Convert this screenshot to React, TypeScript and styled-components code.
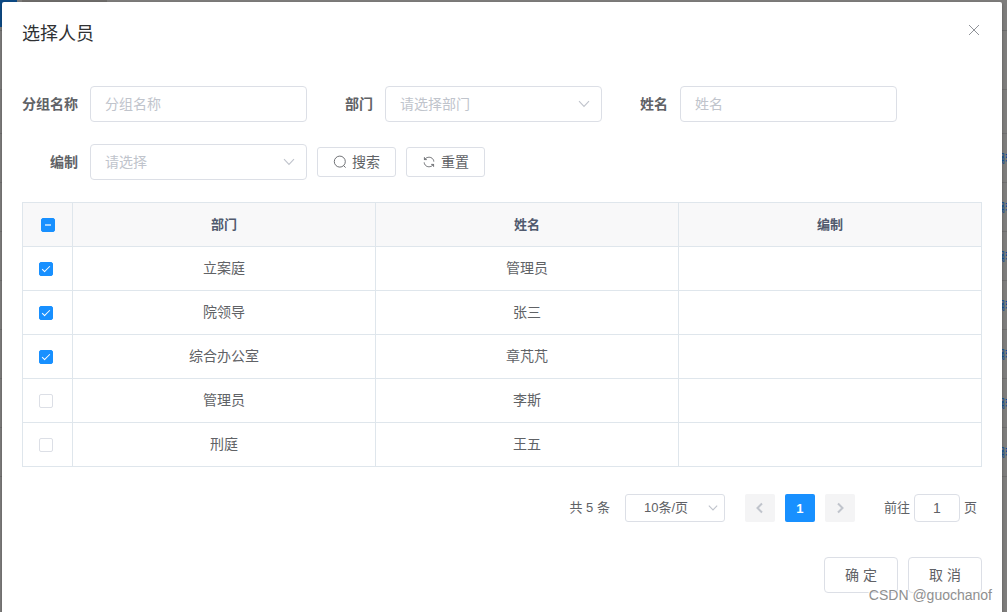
import React, { useEffect, useRef, useState } from "react";
import styled, { createGlobalStyle, css } from "styled-components";

const GlobalStyle = createGlobalStyle`
  *, *::before, *::after { box-sizing: border-box; }
  body {
    margin: 0;
    background: #7f7f7f;
    color: #606266;
    font-family: "Liberation Sans", "Noto Sans CJK SC", sans-serif;
    font-size: 14px;
  }
  button, input, select { font: inherit; color: inherit; margin: 0; }
`;

const Screen = styled.div`
  position: relative;
  min-height: 100vh;
  padding: 2px 5px 0 2px;
  overflow: hidden;
`;

/* The dimmed page that stays behind the dialog */
const Behind = styled.div`
  position: absolute;
  inset: 0;
  overflow: hidden;
  background: #7e7d7c;
`;

const TabStrip = styled.div`
  display: flex;
  gap: 5px;
  height: 31px;
  border-bottom: 1px solid #6c6c6c;
`;

const Tab = styled.div<{ $active?: boolean }>`
  width: ${(p) => (p.$active ? 17 : 85)}px;
  height: 27px;
  background: ${(p) => (p.$active ? "#0d4a86" : "#6f6d6b")};
`;

const BehindRow = styled.div<{ $height: number }>`
  display: flex;
  justify-content: flex-end;
  align-items: center;
  height: ${(p) => p.$height}px;
  border-bottom: 1px solid #706f6f;
`;

const BehindAction = styled.span`
  width: 14px;
  padding-top: 2px;
  overflow: hidden;
  white-space: nowrap;
  font-size: 12px;
  line-height: 18px;
  color: #0c4f96;
`;

const Dialog = styled.section`
  position: relative;
  min-height: calc(100vh - 2px);
  background: #fff;
  border-radius: 2px 2px 0 0;
  box-shadow: 0 1px 3px rgba(0, 0, 0, 0.3);
`;

const DialogHeader = styled.header`
  display: flex;
  justify-content: space-between;
  padding: 20px 20px 10px;
`;

const Title = styled.h1`
  margin: 0;
  font-size: 18px;
  line-height: 24px;
  font-weight: 400;
  color: #303133;
`;

const CloseButton = styled.button`
  display: flex;
  align-items: center;
  justify-content: center;
  width: 16px;
  height: 16px;
  padding: 0;
  border: 0;
  background: none;
  color: #909399;
`;

const DialogBody = styled.div`
  padding: 30px 20px 0;
`;

const SearchForm = styled.form`
  display: flex;
  flex-wrap: wrap;
  align-items: center;
  gap: 22px 10px;
  max-width: 900px;
  margin-bottom: 22px;
`;

const FormItem = styled.div`
  display: flex;
  align-items: center;
`;

const Label = styled.label`
  width: 68px;
  padding-right: 12px;
  text-align: right;
  white-space: nowrap;
  font-weight: 700;
  line-height: 36px;
`;

const fieldBox = css`
  border: 1px solid #dcdfe6;
  border-radius: 4px;
  background: #fff;
  outline: none;
`;

const TextInput = styled.input`
  ${fieldBox}
  width: 217px;
  height: 36px;
  padding: 0 14px;
  &::placeholder { color: #c0c4cc; opacity: 1; }
`;

const SelectWrap = styled.div`
  display: grid;
  align-items: center;
  & > * { grid-area: 1 / 1; }
`;

const Select = styled.select<{ $small?: boolean }>`
  ${fieldBox}
  appearance: none;
  width: ${(p) => (p.$small ? 100 : 217)}px;
  height: ${(p) => (p.$small ? 28 : 36)}px;
  padding: ${(p) => (p.$small ? "0 24px 2px 18px" : "0 30px 0 14px")};
  border-radius: ${(p) => (p.$small ? 3 : 4)}px;
  color: ${(p) => (p.$small ? "#606266" : "#c0c4cc")};
`;

const Arrow = styled.svg<{ $small?: boolean }>`
  justify-self: end;
  margin-right: ${(p) => (p.$small ? 7 : 12)}px;
  pointer-events: none;
  fill: none;
  stroke: #c0c4cc;
`;

const ToolButton = styled.button`
  ${fieldBox}
  display: flex;
  align-items: center;
  gap: 5px;
  height: 30px;
  padding: 0 15px;
  border-radius: 3px;
`;

/* CJK glyphs sit low in their line box; the bottom padding centres them */
const ButtonText = styled.span`
  padding-bottom: 2px;
`;

const DataTable = styled.table`
  width: 100%;
  table-layout: fixed;
  border-collapse: separate;
  border-spacing: 0;
  border: solid #dfe6ec;
  border-width: 1px 0 0 1px;
`;

const cell = css`
  height: 44px;
  padding: 0 10px 3px;
  border: solid #dfe6ec;
  border-width: 0 1px 1px 0;
  text-align: center;
`;

const HeadCell = styled.th`
  ${cell}
  background: #f8f8f9;
  color: #515a6e;
  font-size: 13px;
  font-weight: 700;
`;

const Cell = styled.td`
  ${cell}
`;

const CheckHead = styled(HeadCell)`
  width: 50px;
  padding: 0 0 0 18px;
`;

const CheckCell = styled(Cell)`
  padding: 0 0 0 16px;
`;

const Checkbox = styled.input`
  appearance: none;
  display: flex;
  align-items: center;
  justify-content: center;
  width: 14px;
  height: 14px;
  border: 1px solid #dcdfe6;
  border-radius: 2px;
  background: #fff;
  &:checked, &:indeterminate {
    border-color: #1890ff;
    background: #1890ff;
  }
  &:checked::after {
    content: "";
    width: 4px;
    height: 8px;
    margin-bottom: 2px;
    border: solid #fff;
    border-width: 0 1px 1px 0;
    transform: rotate(45deg);
  }
  &:indeterminate::after {
    content: "";
    width: 6px;
    height: 2px;
    margin: 0;
    border: 0;
    background: #a3d3ff;
    transform: none;
  }
`;

const Pagination = styled.nav`
  display: flex;
  justify-content: flex-end;
  align-items: center;
  height: 28px;
  margin-top: 27px;
  padding-right: 5px;
  font-size: 13px;
`;

const PagerText = styled.span`
  padding-bottom: 3px;
`;

const Total = styled(PagerText)`
  margin-right: 15px;
`;

const Pager = styled.div`
  display: flex;
  gap: 10px;
  margin: 0 29px 0 20px;
`;

const PageButton = styled.button<{ $active?: boolean }>`
  display: flex;
  align-items: center;
  justify-content: center;
  width: 30px;
  height: 28px;
  padding: 0;
  border: 0;
  border-radius: 2px;
  font-weight: 700;
  background: ${(p) => (p.$active ? "#1890ff" : "#f4f4f5")};
  color: ${(p) => (p.$active ? "#fff" : "#c0c4cc")};
`;

const Jump = styled.label`
  display: flex;
  align-items: center;
  gap: 4px;
`;

const JumpInput = styled.input`
  ${fieldBox}
  width: 46px;
  height: 28px;
  padding: 0 3px;
  text-align: center;
  font-size: 14px;
`;

const DialogFooter = styled.footer`
  display: flex;
  justify-content: flex-end;
  gap: 10px;
  padding: 35px 20px 16px;
`;

const FooterButton = styled.button`
  ${fieldBox}
  width: 74px;
  height: 36px;
  padding: 0 0 2px;
`;

const Watermark = styled.div`
  position: absolute;
  right: 15px;
  bottom: 8px;
  font-size: 14px;
  line-height: 18px;
  color: #8f8f8f;
  text-shadow: -1px -1px 0 #fff, 0 0 1px #fff;
`;

const Chevron = ({ small }: { small?: boolean }) => (
  <Arrow $small={small} width={small ? 10 : 12} height={small ? 10 : 12} viewBox="0 0 12 12" strokeWidth={small ? 1.3 : 1.1} aria-hidden="true">
    <path d="M1 3.2 6 8.4 11 3.2" />
  </Arrow>
);

const SearchIcon = () => (
  <svg width="14" height="14" viewBox="0 0 14 14" fill="none" stroke="#606266" strokeWidth="0.9" aria-hidden="true">
    <circle cx="6.8" cy="6.6" r="5.5" />
    <path d="M10.6 10.6 12.6 12.6" />
  </svg>
);

const RefreshIcon = () => (
  <svg width="14" height="14" viewBox="0 0 14 14" fill="none" stroke="#606266" strokeWidth="0.9" aria-hidden="true">
    <path d="M2.4 2.2V4.6H4.8M2.5 4.5C4.4 2 8 1.6 10 3.2 11.2 4.2 11.8 5.4 11.8 6.6" />
    <path d="M11.6 11.8V9.4H9.2M11.5 9.5C9.6 12 6 12.4 4 10.8 2.8 9.8 2.2 8.6 2.2 7.4" />
  </svg>
);

const PageArrow = ({ next }: { next?: boolean }) => (
  <svg width="12" height="12" viewBox="0 0 12 12" fill="none" stroke="currentColor" strokeWidth="2" aria-hidden="true">
    <path d={next ? "M4 1.5 8.5 6 4 10.5" : "M8 1.5 3.5 6 8 10.5"} />
  </svg>
);

const people = [
  { dept: "立案庭", name: "管理员", post: "" },
  { dept: "院领导", name: "张三", post: "" },
  { dept: "综合办公室", name: "章芃芃", post: "" },
  { dept: "管理员", name: "李斯", post: "" },
  { dept: "刑庭", name: "王五", post: "" },
];

export default function App() {
  const [selected, setSelected] = useState([true, true, true, false, false]);
  const allRef = useRef<HTMLInputElement>(null);
  const all = selected.every(Boolean);
  const some = selected.some(Boolean) && !all;

  useEffect(() => {
    if (allRef.current) allRef.current.indeterminate = some;
  }, [some]);

  return (
    <>
      <GlobalStyle />
      <Screen>
        <Behind aria-hidden="true">
          <TabStrip>
            <Tab $active />
            <Tab />
          </TabStrip>
          <BehindRow $height={59} />
          <BehindRow $height={44} />
          {Array.from({ length: 7 }, (_, i) => (
            <BehindRow key={i} $height={49}>
              <BehindAction>编辑</BehindAction>
            </BehindRow>
          ))}
        </Behind>
        <Dialog role="dialog" aria-labelledby="dialog-title">
          <DialogHeader>
            <Title id="dialog-title">选择人员</Title>
            <CloseButton type="button" aria-label="关闭">
              <svg width="12" height="12" viewBox="0 0 12 12" fill="none" stroke="currentColor" strokeWidth="1">
                <path d="M1 1 11 11M11 1 1 11" />
              </svg>
            </CloseButton>
          </DialogHeader>
          <DialogBody>
            <SearchForm onSubmit={(e) => e.preventDefault()}>
              <FormItem>
                <Label htmlFor="group">分组名称</Label>
                <TextInput id="group" placeholder="分组名称" />
              </FormItem>
              <FormItem>
                <Label htmlFor="dept">部门</Label>
                <SelectWrap>
                  <Select id="dept">
                    <option>请选择部门</option>
                  </Select>
                  <Chevron />
                </SelectWrap>
              </FormItem>
              <FormItem>
                <Label htmlFor="name">姓名</Label>
                <TextInput id="name" placeholder="姓名" />
              </FormItem>
              <FormItem>
                <Label htmlFor="post">编制</Label>
                <SelectWrap>
                  <Select id="post">
                    <option>请选择</option>
                  </Select>
                  <Chevron />
                </SelectWrap>
              </FormItem>
              <ToolButton type="submit">
                <SearchIcon />
                <ButtonText>搜索</ButtonText>
              </ToolButton>
              <ToolButton type="reset">
                <RefreshIcon />
                <ButtonText>重置</ButtonText>
              </ToolButton>
            </SearchForm>
            <DataTable>
              <thead>
                <tr>
                  <CheckHead>
                    <Checkbox
                      ref={allRef}
                      type="checkbox"
                      aria-label="全选"
                      checked={all}
                      onChange={() => setSelected(selected.map(() => !all))}
                    />
                  </CheckHead>
                  <HeadCell>部门</HeadCell>
                  <HeadCell>姓名</HeadCell>
                  <HeadCell>编制</HeadCell>
                </tr>
              </thead>
              <tbody>
                {people.map((p, i) => (
                  <tr key={p.dept}>
                    <CheckCell>
                      <Checkbox
                        type="checkbox"
                        aria-label={p.name}
                        checked={selected[i]}
                        onChange={() => setSelected(selected.map((s, j) => (j === i ? !s : s)))}
                      />
                    </CheckCell>
                    <Cell>{p.dept}</Cell>
                    <Cell>{p.name}</Cell>
                    <Cell>{p.post}</Cell>
                  </tr>
                ))}
              </tbody>
            </DataTable>
            <Pagination aria-label="分页">
              <Total>共 5 条</Total>
              <SelectWrap>
                <Select $small aria-label="每页条数">
                  <option>10条/页</option>
                </Select>
                <Chevron small />
              </SelectWrap>
              <Pager>
                <PageButton type="button" aria-label="上一页" disabled>
                  <PageArrow />
                </PageButton>
                <PageButton type="button" $active>
                  1
                </PageButton>
                <PageButton type="button" aria-label="下一页" disabled>
                  <PageArrow next />
                </PageButton>
              </Pager>
              <Jump>
                <PagerText>前往</PagerText>
                <JumpInput defaultValue="1" />
                <PagerText>页</PagerText>
              </Jump>
            </Pagination>
          </DialogBody>
          <DialogFooter>
            <FooterButton type="button">确 定</FooterButton>
            <FooterButton type="button">取 消</FooterButton>
          </DialogFooter>
        </Dialog>
        <Watermark>CSDN @guochanof</Watermark>
      </Screen>
    </>
  );
}
